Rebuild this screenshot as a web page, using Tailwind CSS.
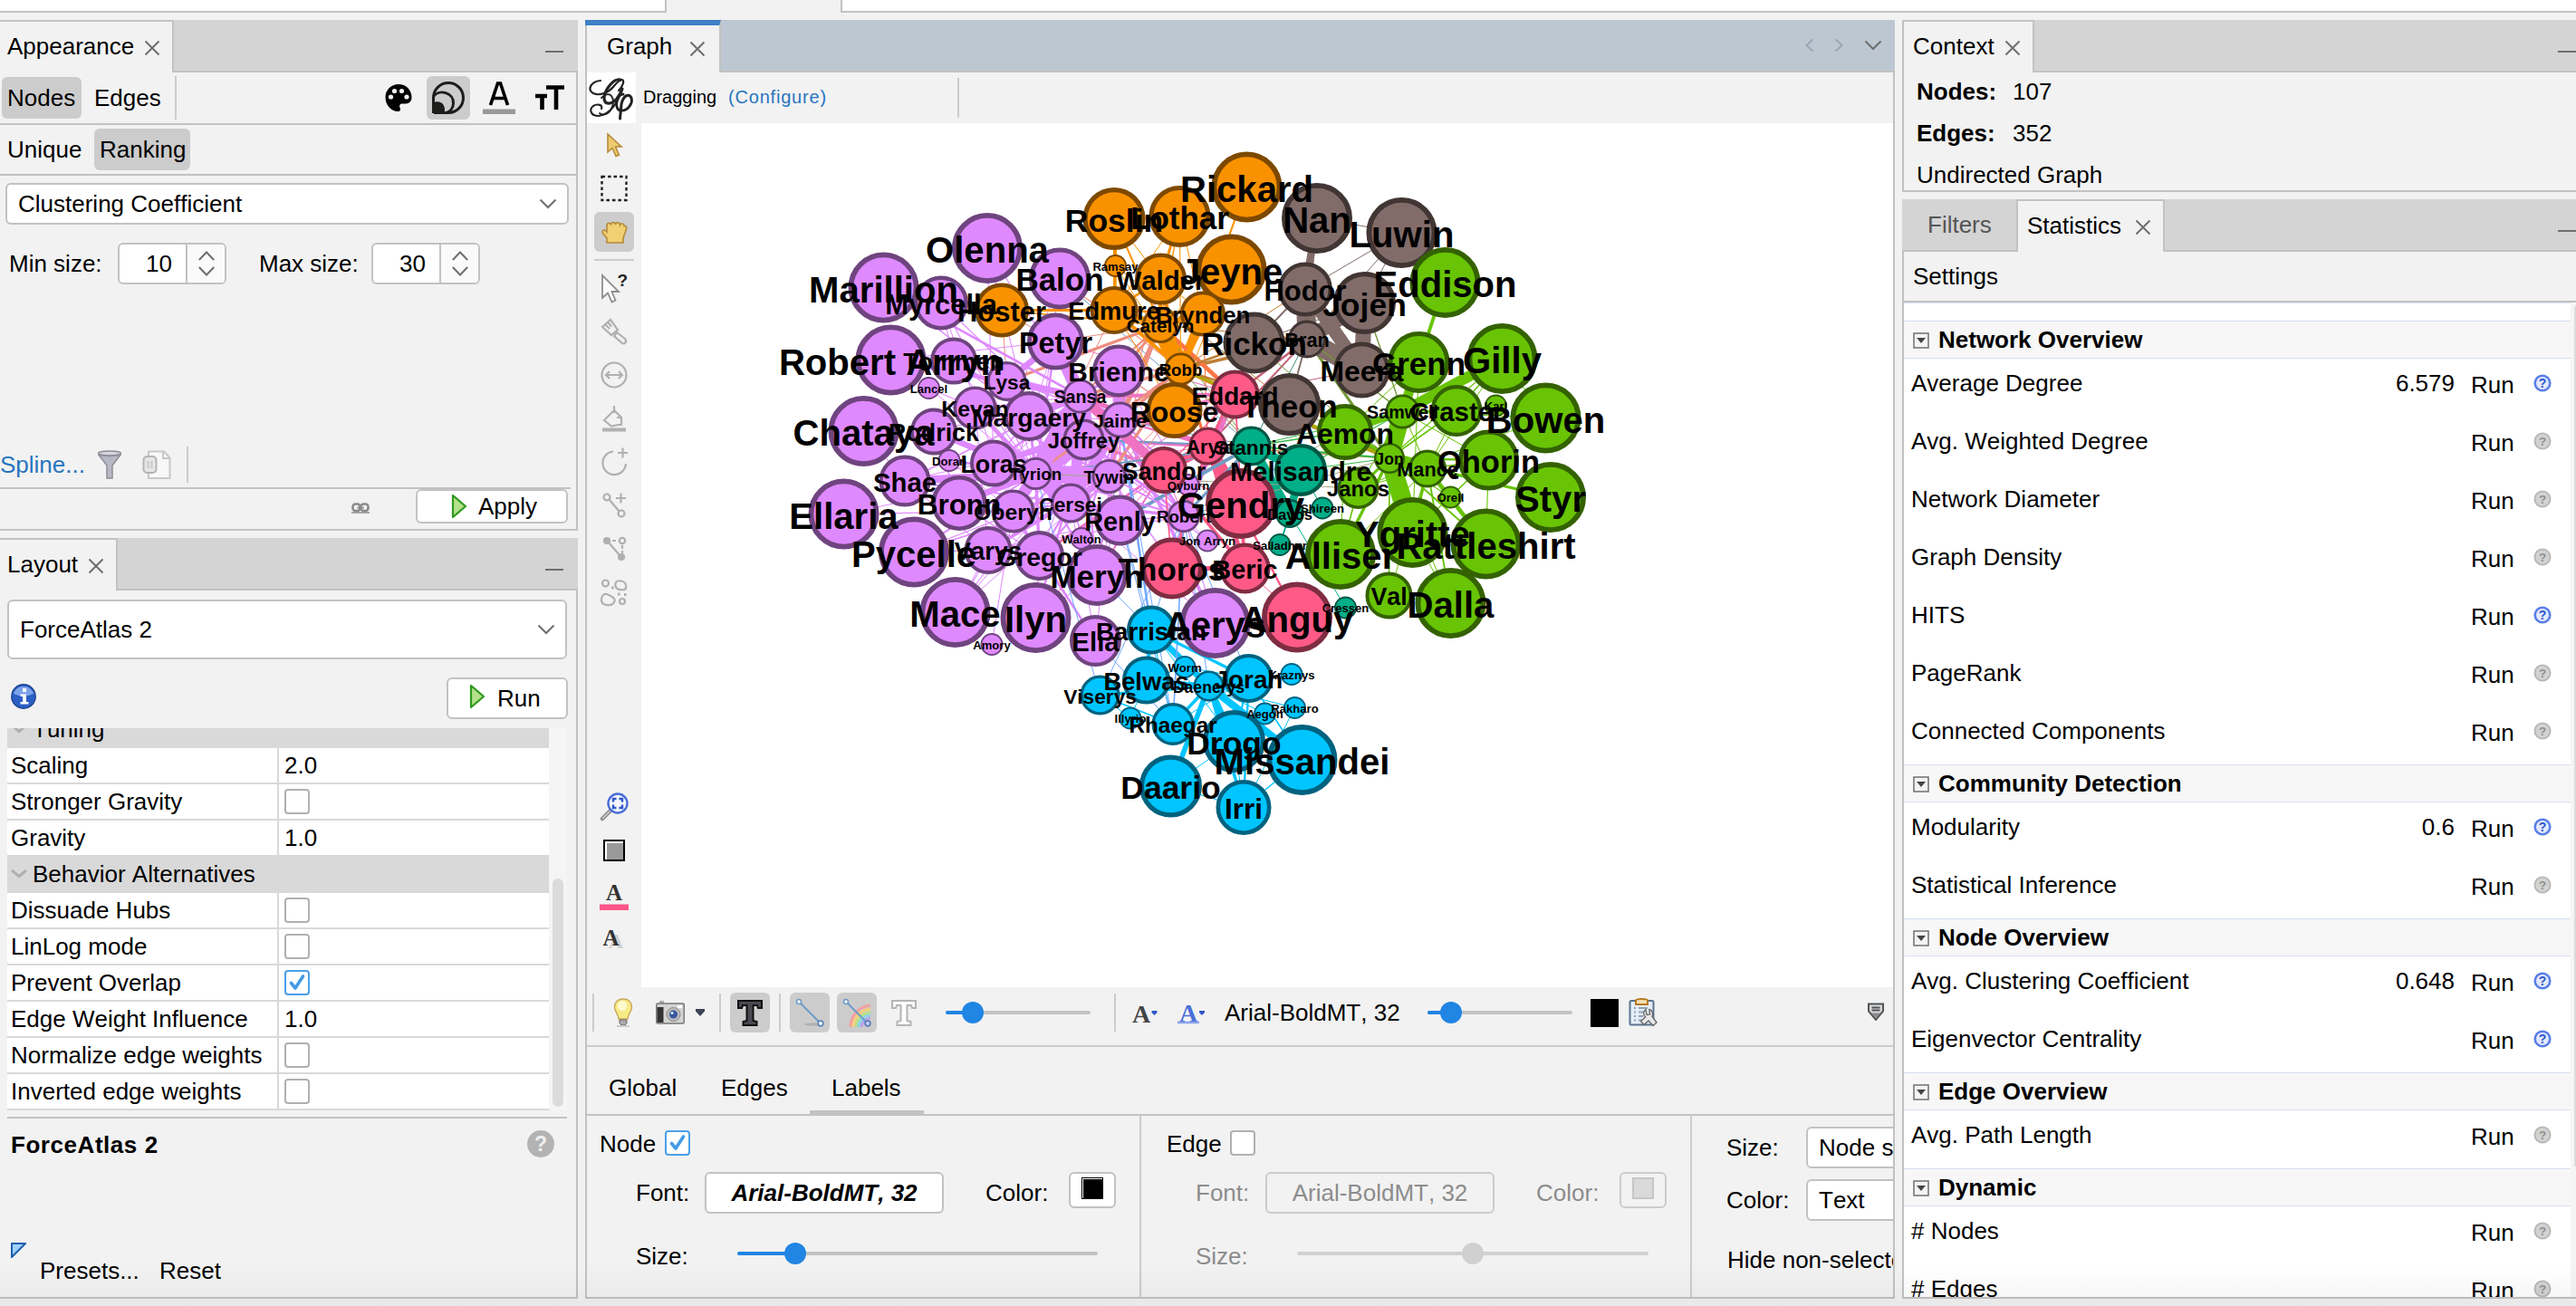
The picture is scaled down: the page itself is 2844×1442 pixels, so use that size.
<!DOCTYPE html>
<html lang="en">
<head>
<meta charset="utf-8">
<title>Gephi</title>
<script src="https://cdn.jsdelivr.net/npm/@tailwindcss/browser@4"></script>
</head>
<body class="relative flex h-[1442px] w-[2844px] flex-col overflow-hidden bg-[#f2f2f2] font-['Liberation_Sans',Arial,sans-serif] text-[26px] leading-[30px] text-black [font-kerning:none]">

<!-- shared symbols -->
<svg class="hidden">
  <symbol id="close" viewBox="0 0 18 18"><path d="M1.5 1.5l15 15M16.500 1.500l-15 15" fill="none" stroke="#6e6e6e" stroke-width="2"/></symbol>
  <symbol id="chev" viewBox="0 0 20 12"><path d="M1.5 1.5l8.500 8.500l8.500-8.500" fill="none" stroke="#6e6e6e" stroke-width="2"/></symbol>
  <symbol id="spin" viewBox="0 0 18 28"><path d="M.8 10L9 1.500L17.200 10M.8 18l8.200 8.500l8.200-8.500" fill="none" stroke="#6e6e6e" stroke-width="2"/></symbol>
  <symbol id="play" viewBox="0 0 18 28"><path d="M2 2L16 14L2 26Z" fill="#b5e08c" stroke="#2f9a1f" stroke-width="2.200" stroke-linejoin="round"/></symbol>
  <symbol id="tick" viewBox="0 0 24 24"><path d="M5.500 12.500l4.500 5.500l8.500-13" fill="none" stroke="#459be6" stroke-width="3.600" stroke-linecap="round" stroke-linejoin="round"/></symbol>
  <symbol id="toggle" viewBox="0 0 18 18"><rect x="1" y="1" width="16" height="16" fill="#f4f4f4" stroke="#777" stroke-width="1.600"/><path d="M4 6h10l-5 6z" fill="#444"/></symbol>
  <symbol id="helpBlue" viewBox="0 0 20 20"><circle cx="10" cy="10" r="8.300" fill="#e3e9ff" stroke="#5b7fe8" stroke-width="2.600"/><text x="10" y="15" text-anchor="middle" font-size="14" font-weight="bold" font-family="Liberation Sans" fill="#2f55c8">?</text></symbol>
  <symbol id="helpGray" viewBox="0 0 20 20"><circle cx="10" cy="10" r="8.600" fill="#d2d2d2" stroke="#b6b6b6" stroke-width="1.800"/><text x="10" y="14.800" text-anchor="middle" font-size="13.500" font-weight="bold" font-family="Liberation Sans" fill="#909090">?</text></symbol>
</svg>

<!-- perspective tabs, cut off by the top of the window -->
<div class="flex h-[22px] shrink-0 items-start">
  <div class="h-[14px] w-[736px] border-r-2 border-b-2 border-[#c2c2c2] bg-white"></div>
  <div class="w-[192px]"></div>
  <div class="h-[14px] flex-1 border-b-2 border-l-2 border-[#c2c2c2] bg-white"></div>
</div>

<div class="flex h-[1412px] shrink-0">
  <!-- left column -->
  <div class="mr-2 flex w-[638px] flex-col">
    <!-- Appearance -->
    <section class="flex h-[564px] flex-col border-r-2 border-b-2 border-[#c2c2c2]">
      <header class="-mr-0.5 flex h-[58px] shrink-0">
        <div class="flex w-[192px] items-center border-t-2 border-r-2 border-[#c2c2c2] pb-0.5 pl-2">
          <span class="w-[151px]">Appearance</span><svg class="mt-1 size-[18px]"><use href="#close"/></svg>
        </div>
        <div class="flex-1 border-b-2 border-[#c2c2c2] bg-[#d4d4d4]"><div class="mt-[34px] mr-4 ml-auto h-0.5 w-5 bg-[#6e6e6e]"></div></div>
      </header>
      <div class="flex h-[58px] shrink-0 items-center border-b-2 border-[#c2c2c2] pl-0.5">
        <span class="w-[88px] rounded-md bg-[#ccc] px-1.5 py-2">Nodes</span>
        <span class="ml-[14px] w-[89px]">Edges</span>
        <i class="h-12 w-0.5 bg-[#ccc]"></i>
        <svg class="ml-[227px] size-9" viewBox="0 0 36 36"><path d="M18 3C9.500 3 3.500 9.500 3.500 17.500S9.500 33 17.500 33c2.500 0 3-2 2-4c-1-3 0-4.500 2.500-4.500h4c4 0 6.500-3 6.500-7C32.500 9 26 3 18 3Z"/><g fill="#f2f2f2"><circle cx="9.500" cy="17" r="2.600"/><circle cx="13.500" cy="10.500" r="2.600"/><circle cx="21.500" cy="10.500" r="2.600"/><circle cx="27" cy="17" r="2.600"/></g></svg>
        <span class="ml-[13px] flex h-12 w-12 items-center justify-center rounded-md bg-[#ccc]"><svg class="size-9" viewBox="0 0 36 36" fill="none" stroke="#1d1d1b" stroke-width="3"><path d="M1.500 35V18A16.500 16.500 0 1 1 18 34.500H2"/><path d="M1.500 16.500C8 8 24 12 23.500 24C23.500 29 20 33 16 34.500"/><path d="M1 23.500c8-4 15 2 12.500 11.500H1z" fill="#1d1d1b" stroke="none"/></svg></span>
        <svg class="ml-[14px] h-[36px] w-9" viewBox="0 0 36 36"><path d="M8.500 26L16.500 2h3L27.500 26M11 18.500h14" fill="none" stroke="#000" stroke-width="3.600"/><path d="M0 30.500h36V36H0z" fill="#999"/></svg>
        <svg class="ml-[22px] h-7 w-8" viewBox="0 0 32 28"><path d="M12 2.500h20M23 2.500V27M0 12h13M7.500 12V27" fill="none" stroke="#000" stroke-width="4.600"/></svg>
      </div>
      <div class="flex h-[56px] shrink-0 items-center border-b-2 border-[#c2c2c2] pl-2">
        <span class="w-[96px]">Unique</span><span class="w-[106px] rounded-md bg-[#ccc] px-1.5 py-2">Ranking</span>
      </div>
      <div class="mt-2 ml-1.5 flex h-[46px] w-[622px] shrink-0 items-center justify-between rounded-md border-2 border-[#c2c2c2] bg-white pr-[11px] pl-3">Clustering Coefficient<svg class="h-3 w-5"><use href="#chev"/></svg></div>
      <div class="mt-5 flex h-[46px] shrink-0 items-center pl-2.5">
        <span class="w-[120px]">Min size:</span>
        <div class="flex h-[46px] w-[120px] items-center rounded-md border-2 border-[#c2c2c2] bg-white"><span class="flex-1 pr-[15px] text-right">10</span><span class="flex h-full w-[43px] items-center justify-center rounded-r border-l-2 border-[#c2c2c2] bg-[#fafafa]"><svg class="h-7 w-[18px]"><use href="#spin"/></svg></span></div>
        <span class="ml-9 w-[124px]">Max size:</span>
        <div class="flex h-[46px] w-[120px] items-center rounded-md border-2 border-[#c2c2c2] bg-white"><span class="flex-1 pr-[15px] text-right">30</span><span class="flex h-full w-[43px] items-center justify-center rounded-r border-l-2 border-[#c2c2c2] bg-[#fafafa]"><svg class="h-7 w-[18px]"><use href="#spin"/></svg></span></div>
      </div>
      <div class="mt-auto flex h-[52px] w-[630px] shrink-0 items-center border-b-2 border-[#c2c2c2]">
        <span class="w-[107px] text-[#2675bf]">Spline...</span>
        <svg class="h-8 w-7" viewBox="0 0 28 32"><ellipse cx="14" cy="3.500" rx="12.500" ry="2.500" fill="#d7d7e0" stroke="#8d8d96" stroke-width="1.500"/><path d="M1.500 4.500L11 17v14h6V17L26.500 4.500C22 7 6 7 1.500 4.500Z" fill="#b9b9c6" stroke="#8d8d96" stroke-width="1.500"/></svg>
        <svg class="ml-[22px] h-8 w-8" viewBox="0 0 32 32" fill="#f8f8f8" stroke="#c8c8c8" stroke-width="2"><path d="M7 1.500h17l6.500 7V31H7z"/><path d="M23 2v7h7" fill="none"/><rect x="1.500" y="7" width="14" height="18" rx="4" fill="#e6e6e6" stroke="#b4b4b4"/><path d="M6.500 12v8M10.500 12v8" fill="none"/></svg>
        <i class="ml-[17px] h-10 w-0.5 bg-[#ccc]"></i>
      </div>
      <div class="flex h-[44px] shrink-0 items-start justify-end pr-[9px]">
        <svg class="mt-[15px] mr-[51px] h-3 w-5" viewBox="0 0 20 12" fill="none" stroke="#8a8a8a" stroke-width="2.600"><rect x="1.500" y="1.500" width="8" height="7.500" rx="3"/><rect x="10.500" y="1.500" width="8" height="7.500" rx="3"/><path d="M6 5.500h8M0 11h20" stroke-width="1.600"/></svg>
        <button class="flex h-[38px] w-[168px] items-center rounded-md border-2 border-[#c2c2c2] bg-white pl-[37px]"><svg class="h-7 w-[18px]"><use href="#play"/></svg><span class="ml-3">Apply</span></button>
      </div>
    </section>
    <!-- Layout -->
    <section class="mt-2 flex h-[840px] flex-col border-r-2 border-b-2 border-[#c2c2c2]">
      <header class="-mr-0.5 flex h-[58px] shrink-0">
        <div class="flex w-[130px] items-center border-t-2 border-r-2 border-[#c2c2c2] pb-0.5 pl-2"><span class="w-[89px]">Layout</span><svg class="mt-1 size-[18px]"><use href="#close"/></svg></div>
        <div class="flex-1 border-b-2 border-[#c2c2c2] bg-[#d4d4d4]"><div class="mt-[34px] mr-4 ml-auto h-0.5 w-5 bg-[#6e6e6e]"></div></div>
      </header>
      <div class="mt-2.5 ml-2 flex h-[66px] w-[618px] shrink-0 items-center justify-between rounded-md border-2 border-[#c2c2c2] bg-white pr-[11px] pl-3">ForceAtlas 2<svg class="h-3 w-5"><use href="#chev"/></svg></div>
      <div class="mt-5 mr-[9px] flex h-[46px] shrink-0 items-center justify-between pl-3">
        <svg class="mb-1 size-7" viewBox="0 0 28 28"><circle cx="14" cy="14" r="13.200" fill="#2c5fc4" stroke="#1e4590" stroke-width="1.400"/><path d="M3 11a11.500 11.500 0 0 1 22 0q-11 5-22 0z" fill="#7fa3ea"/><path d="M13 5h4v4h-4zM10.500 11.500H17V20h2.500v2.500h-9V20H13v-6h-2.500z" fill="#fff"/></svg>
        <button class="flex h-[46px] w-[134px] items-center rounded-md border-2 border-[#c2c2c2] bg-white pl-[23px]"><svg class="mb-1 h-7 w-[18px]"><use href="#play"/></svg><span class="ml-[13px]">Run</span></button>
      </div>
      <div class="mt-2.5 ml-2 flex h-[422px] w-[618px] shrink-0 overflow-hidden">
        <div id="props" class="flex h-[422px] w-[598px] flex-col justify-end overflow-hidden"></div>
        <div class="w-5 bg-[#f5f5f5] px-1 pt-[166px]"><div class="h-[252px] rounded-full bg-[#dbdbdb]"></div></div>
      </div>
      <div class="mt-[7px] ml-2 h-0.5 w-[618px] shrink-0 bg-[#c2c2c2]"></div>
      <div class="mt-3 flex items-center justify-between pr-[23px] pl-3"><b class="mt-0.5 tracking-[0.55px]">ForceAtlas 2</b>
        <svg class="size-8" viewBox="0 0 32 32"><circle cx="16" cy="16" r="15" fill="#b3b3b3"/><text x="16" y="24" text-anchor="middle" font-size="23" font-weight="bold" font-family="Liberation Sans" fill="#f0f0f0">?</text></svg></div>
      <div class="mt-auto flex items-start pb-[14px] pl-3"><svg class="size-[17px]" viewBox="0 0 17 17"><path d="M1 1h15L1 16z" fill="#9fd0f8" stroke="#1f5fae" stroke-width="2"/></svg><span class="ml-[15px] flex h-[46px] w-[132px] items-end">Presets...</span><span class="flex h-[46px] items-end">Reset</span></div>
    </section>
  </div>

  <!-- graph window -->
  <section class="flex w-[1446px] flex-col border-x-2 border-b-2 border-[#c2c2c2]">
    <header class="-mx-0.5 flex h-[58px] shrink-0">
      <div class="flex w-[150px] items-center border-t-[6px] border-r-2 border-t-[#3d80c6] border-r-[#c2c2c2] pb-1.5 pl-6"><span class="w-[91px]">Graph</span><svg class="mt-1.5 size-[18px]"><use href="#close"/></svg></div>
      <div class="flex flex-1 items-center justify-end border-b-2 border-[#c2c2c2] bg-[#bdc7d1] pr-3.5">
        <svg class="h-4 w-3" viewBox="0 0 12 16"><path d="M9.500 1.500L2.500 8l7 6.500" fill="none" stroke="#9aa6b3" stroke-width="2"/></svg>
        <svg class="ml-5 h-4 w-3" viewBox="0 0 12 16"><path d="M2.500 1.500l7 6.500l-7 6.500" fill="none" stroke="#9aa6b3" stroke-width="2"/></svg>
        <svg class="ml-[22px] h-3 w-5"><use href="#chev"/></svg>
      </div>
    </header>
    <div class="flex h-14 shrink-0 items-center text-[20px]">
      <svg class="h-14 w-[54px] bg-white" viewBox="0 0 54 56" fill="none" stroke="#222" stroke-linecap="round"><path d="M15 9C4 10 0 19 7 23c7 3.500 17-1 22-7c4-5 8-8 10-8c3 1 0 8-4 12" stroke-width="2.200"/><path d="M37 8c-7-2-17 10-18 20c0 8 8 8 14 1c3-4 5-8 6-11" stroke-width="3.200"/><path d="M39 19C34 32 27 46 13 48C4 48 2 41 7 37c5-3 11-1 9 3" stroke-width="2.200"/><path d="M16 28c10-10 16 1 11 12c-3 7-10 8-13 5" stroke-width="1.800"/><path d="M40 24c-8 0-10 17-3 18c8 1 14-8 12-14c-3-6-9-2-11 7l-1.500 16" stroke-width="3"/></svg>
      <span class="mb-0.5 ml-2 w-[94px]">Dragging</span><span class="mb-0.5 w-[253px] tracking-[0.8px] text-[#2675bf]">(Configure)</span>
      <i class="h-11 w-0.5 bg-[#ccc]"></i>
    </div>
    <div class="flex h-[954px] shrink-0">
      <div class="flex w-[60px] flex-col items-center">
        <div class="flex h-12 items-center"><svg class="size-8" viewBox="0 0 32 32"><path d="M9 4v20l5-4.500l4 9l3.500-1.500L17.500 18H24z" fill="#eccb6e" stroke="#b58a3c" stroke-width="1.600"/></svg></div>
        <div class="flex h-12 items-center"><svg class="size-8" viewBox="0 0 32 32"><rect x="2.500" y="3" width="27" height="26" fill="none" stroke="#222" stroke-width="2.400" stroke-dasharray="3.600 2.900"/></svg></div>
        <div class="flex h-12 items-center"><div class="flex h-11 w-11 items-center justify-center rounded-md bg-[#ccc]"><svg class="size-8" viewBox="0 0 32 32"><path d="M8 28v-5L3.500 17.500C2 14 5 12.500 8 16V8.500c.500-3 4-3 4.500 0C13 4.500 17 4.500 17.500 8c.500-3 4.500-3 5 .5c1-2.500 4.500-2 4.500 1c2-.5 3 1 2.500 3.500L26 23v5z" fill="#f1cf73" stroke="#b58a3c" stroke-width="1.600"/></svg></div></div>
        <div class="flex h-[14px] items-center"><div class="h-0.5 w-11 bg-[#ccc]"></div></div>
        <div class="flex h-12 items-center"><svg class="h-9 w-8" viewBox="0 0 32 36"><path d="M3 4v25l6-5.500l4.500 10l4-2L13.500 22H21z" fill="#fafafa" stroke="#8e8e8e" stroke-width="1.800"/><text x="19.500" y="16" font-size="19" font-weight="bold" font-family="Liberation Sans" fill="#222">?</text></svg></div>
        <div class="flex h-12 items-center"><svg class="size-8" viewBox="0 0 32 32" fill="none" stroke="#b0b0b0" stroke-width="2.200"><path d="M3 11l9-8l8 11l-7 6zM6 8l5 5M9 5.500l4 5"/><path d="M19 17l-3 4l9 8c4 1.500 5-3 3-5z"/></svg></div>
        <div class="flex h-12 items-center"><svg class="size-8" viewBox="0 0 32 32" fill="none" stroke="#b0b0b0" stroke-width="2.200"><circle cx="16" cy="16" r="13.500"/><path d="M7 16h18M11 12l-4 4l4 4M21 12l4 4l-4 4"/></svg></div>
        <div class="flex h-12 items-center"><svg class="size-8" viewBox="0 0 32 32" fill="none" stroke="#b0b0b0" stroke-width="2.200"><path d="M5 18L16 7l8 8v8h-3l-8 1.500zM16 2v8M24 15h-5"/><path d="M3 28.500h26" stroke-width="4"/></svg></div>
        <div class="flex h-12 items-center"><svg class="size-8" viewBox="0 0 32 32" fill="none" stroke="#b0b0b0" stroke-width="2.200"><path d="M15 4.500A12.800 12.800 0 1 0 29 18M20 6h11M25.500.5v11"/></svg></div>
        <div class="flex h-12 items-center"><svg class="size-8" viewBox="0 0 32 32" fill="none" stroke="#b0b0b0" stroke-width="2.200"><circle cx="8" cy="7" r="3.500"/><circle cx="24" cy="25" r="3.500"/><path d="M10.500 9.500l11 13M18 8h11M23.500 2.500v11"/></svg></div>
        <div class="flex h-12 items-center"><svg class="size-8" viewBox="0 0 32 32" fill="none" stroke="#b0b0b0" stroke-width="2.200"><circle cx="8" cy="7" r="3" fill="#b0b0b0"/><circle cx="24" cy="25" r="3" fill="#b0b0b0"/><circle cx="25" cy="7" r="3.200"/><path d="M10 9l12 14M14 7h4M25 12v4M25 18v3"/></svg></div>
        <div class="flex h-12 items-center"><svg class="size-8" viewBox="0 0 32 32" fill="none" stroke="#b0b0b0" stroke-width="2.200"><circle cx="6.500" cy="6" r="3.500"/><path d="M18 5c2-3 10-2 11 3c1 4-1 6-5 5c-5 1-8-4-6-8zM4 19c3-3 6 0 8 1c4 2 6 4 4 7c-2 4-10 4-13 1c-2-3-1-7 1-9z"/><circle cx="25" cy="26" r="3"/><path d="M13 11h2.500M20 18h2.500M27 18.500h2.500" stroke-width="2.800"/></svg></div>
        <div class="mt-auto flex h-[34px] items-center"><svg class="size-8" viewBox="0 0 32 32"><path d="M3 29l9-9" stroke="#8c8c8c" stroke-width="4.500" stroke-linecap="round"/><path d="M3 29l9-9" stroke="#d0d0d0" stroke-width="1.500"/><circle cx="20" cy="12" r="10.500" fill="#f4f6ff" stroke="#4a6fd8" stroke-width="2.400"/><path d="M15 10.500V7h3.500M21.500 7H25v3.500M25 13.500V17h-3.500M18.500 17H15v-3.500" fill="none" stroke="#2f55c8" stroke-width="2.400"/></svg></div>
        <div class="flex h-[62px] items-center"><div class="size-6 border-2 border-black bg-[#999] shadow-[inset_1px_1px_0_1px_#fff]"></div></div>
        <div class="flex h-[42px] items-center"><svg class="size-8" viewBox="0 0 32 32"><text x="16" y="19" text-anchor="middle" font-size="25" font-weight="bold" font-family="Liberation Serif" fill="#333">A</text><path d="M0 23.500h32V30H0z" fill="#ff5589"/></svg></div>
        <div class="mb-[30px] flex h-12 items-center"><svg class="size-8" viewBox="0 0 32 32"><text x="18" y="27" text-anchor="middle" font-size="23" font-weight="bold" font-family="Liberation Serif" fill="#cfcfcf">A</text><text x="12.500" y="23.500" text-anchor="middle" font-size="25" font-weight="bold" font-family="Liberation Serif" fill="#333">A</text></svg></div>
      </div>
      <svg id="graph" class="h-[954px] w-[1382px] bg-white" viewBox="708 136 1382 954" font-family="Liberation Sans, Arial, sans-serif" font-weight="bold" text-anchor="middle"></svg>
    </div>
    <div class="flex h-[66px] shrink-0 items-center border-b-2 border-[#ccc] pb-2">
      <i class="ml-1.5 h-[42px] w-0.5 bg-[#ccc]"></i>
      <svg class="ml-4 size-8" viewBox="0 0 32 32"><path d="M16 1C9 1 6 6 6.500 11c.5 4 4 6 4.500 12h10c.5-6 4-8 4.500-12C26 6 23 1 16 1z" fill="#f7eb86" stroke="#c9a85c" stroke-width="1.500"/><ellipse cx="15" cy="8.500" rx="5" ry="5.500" fill="#fdfad0"/><path d="M12 24h8v3.500l-2 2.500h-4l-2-2.500z" fill="#aaa" stroke="#666"/><path d="M9 31h14" stroke="#ccc" stroke-width="2"/></svg>
      <svg class="ml-5 size-8" viewBox="0 0 32 32"><path d="M4 3h5v3H4z" fill="#aaa"/><rect x=".8" y="6" width="30.500" height="22" rx="1.500" fill="#d4d4d4" stroke="#777" stroke-width="1.500"/><path d="M1.500 10h7v17h-7z" fill="#333"/><path d="M24 8h5v3h-5z" fill="#fff"/><circle cx="19.500" cy="18" r="7.500" fill="#bbb" stroke="#888"/><circle cx="19.500" cy="18" r="4.500" fill="#3b57a0"/><circle cx="18" cy="16.500" r="1.500" fill="#cfe"/></svg>
      <svg class="ml-3 h-2 w-2.5" viewBox="0 0 10 8"><path d="M0 0h10v2.500L5 8L0 2.500z" fill="#3c4454"/></svg>
      <i class="ml-4 h-[42px] w-0.5 bg-[#ccc]"></i>
      <span class="ml-2.5 flex size-11 items-center justify-center rounded-md bg-[#ccc]"><svg class="size-8" viewBox="0 0 32 32"><path d="M3 3h26v8h-4l-1-3h-4.500v17l4 1v4H8.500v-4l4-1V8H8l-1 3H3z" fill="#4a4a52" stroke="#111" stroke-width="2"/></svg></span>
      <i class="ml-2.5 h-[42px] w-0.5 bg-[#ccc]"></i>
      <span class="ml-2.5 flex size-11 items-center justify-center rounded-md bg-[#ccc]"><svg class="size-8" viewBox="0 0 32 32"><ellipse cx="20" cy="29" rx="10" ry="1.800" fill="#b2b2b2"/><path d="M5 5l22 22" stroke="#6f9cc8" stroke-width="2"/><circle cx="4" cy="4" r="2.500" fill="#fff" stroke="#6f9cc8" stroke-width="1.600"/><circle cx="28" cy="28" r="2.800" fill="#fff" stroke="#5c88b8" stroke-width="1.800"/></svg></span>
      <span class="ml-2 flex size-11 items-center justify-center rounded-md bg-[#ccc]"><svg class="size-8" viewBox="0 0 32 32" fill="none" stroke-width="3.200"><path d="M9 32A24 24 0 0 1 31 8" stroke="#f2a0a0"/><path d="M12 32A21 21 0 0 1 31 12" stroke="#f6cf7c"/><path d="M15 32A18 18 0 0 1 31 15.500" stroke="#b9e08a"/><path d="M18 32A14 14 0 0 1 31 19" stroke="#8fd6e8"/><path d="M21 32A11 11 0 0 1 31 22" stroke="#b9a3e8"/><path d="M5 5l22 22" stroke="#6f9cc8" stroke-width="2"/><circle cx="4" cy="4" r="2.500" fill="#fff" stroke="#6f9cc8" stroke-width="1.600"/><circle cx="28" cy="28" r="2.800" fill="#cfd6ff" stroke="#5c78b8" stroke-width="1.800"/></svg></span>
      <svg class="ml-3.5 size-8" viewBox="0 0 32 32"><path d="M3 3h26v8h-4l-1-3h-4.500v17l4 1v4H8.500v-4l4-1V8H8l-1 3H3z" fill="#fcfcfc" stroke="#b4b4b4" stroke-width="2"/></svg>
      <svg class="ml-[30px] h-6 w-40" viewBox="0 0 160 24"><path d="M2 12h156" stroke="#c2c2c2" stroke-width="4" stroke-linecap="round"/><path d="M2 12h28" stroke="#2085e3" stroke-width="4" stroke-linecap="round"/><circle cx="30" cy="12" r="12" fill="#2085e3"/></svg>
      <i class="ml-[26px] h-[42px] w-0.5 bg-[#ccc]"></i>
      <svg class="ml-[18px] size-8" viewBox="0 0 32 32"><text x="10" y="27" text-anchor="middle" font-size="28" font-weight="bold" font-family="Liberation Serif" fill="#444">A</text><path d="M21.500 14h6v2l-3 3l-3-3z" fill="#2f55c8"/></svg>
      <svg class="ml-[18px] size-8" viewBox="0 0 32 32"><text x="12" y="26" text-anchor="middle" font-size="28" font-weight="bold" font-family="Liberation Serif" fill="#4a6fd8">A</text><path d="M0 27h24" stroke="#8aa4ee" stroke-width="2.500"/><path d="M24 14h6v2l-3 3l-3-3z" fill="#2f55c8"/></svg>
      <span class="ml-5 w-[196px] whitespace-nowrap">Arial-BoldMT, 32</span>
      <svg class="ml-7 h-6 w-40" viewBox="0 0 160 24"><path d="M2 12h156" stroke="#c2c2c2" stroke-width="4" stroke-linecap="round"/><path d="M2 12h24" stroke="#2085e3" stroke-width="4" stroke-linecap="round"/><circle cx="26" cy="12" r="12" fill="#2085e3"/></svg>
      <div class="ml-5 size-[31px] bg-black"></div>
      <svg class="ml-[11px] size-8" viewBox="0 0 32 32"><rect x="1.500" y="3" width="26" height="26.500" rx="1.500" fill="#e4edf6" stroke="#5b748e" stroke-width="2"/><path d="M6 11h2M11 11h10M6 15.500h2M11 15.500h7M6 20h2M11 20h5M6 24.500h2M11 24.500h4" stroke="#8fa3b8" stroke-width="1.800"/><path d="M8 2.500C8 .5 21 .5 21 2.500V7H8z" fill="#f3dfb4" stroke="#b57a1e" stroke-width="2"/><path d="M19 12.500c-3 2.500-3 6-.5 8.500l-5 4.500l3.500 4l5-4.500l5 5.500l4-3.500l-5-6.500c1.500-4 0-7-3-8l.5 5.500l-3.500.5z" fill="#e8e8e8" stroke="#6a6a6a" stroke-width="1.400"/></svg>
      <svg class="mr-[9px] mb-0.5 ml-auto size-5" viewBox="0 0 20 20"><path d="M2 1.500h16v8l-8 9.500l-8-9.500z" fill="#d8d8d8" stroke="#4f5358" stroke-width="2"/><path d="M5.500 5.500h9M5.500 8.500h9" stroke="#4f5358" stroke-width="1.800"/><path d="M5 11.500h10l-5 6z" fill="#8a8a8a"/></svg>
    </div>
    <nav class="flex h-[76px] shrink-0 items-stretch border-b-2 border-[#c2c2c2] pt-[30px] pl-6">
      <span class="w-[124px]">Global</span><span class="w-[98px]">Edges</span><span class="h-11 w-[126px] border-b-4 border-[#c2c2c2] pl-6">Labels</span>
    </nav>
    <div class="flex h-[200px] shrink-0 overflow-hidden">
      <div class="w-[612px] shrink-0 border-r-2 border-[#ccc] pl-3.5">
        <div class="mt-4 flex h-7 items-center"><span class="mt-0.5 w-[72px]">Node</span><span class="flex size-7 items-center justify-center rounded border-2 border-[#4aa0e8] bg-white"><svg class="size-6"><use href="#tick"/></svg></span></div>
        <div class="mt-[18px] ml-10 flex h-[46px] items-start"><span class="mt-2 w-[76px]">Font:</span><button class="h-[46px] w-[264px] rounded-md border-2 border-[#c2c2c2] bg-white font-bold whitespace-nowrap italic">Arial-BoldMT, 32</button><span class="mt-2 ml-[46px] w-[92px]">Color:</span><span class="flex h-10 w-[52px] items-center justify-center rounded-md border-2 border-[#c2c2c2] bg-white"><span class="mb-1 size-6 border border-black bg-black shadow-[inset_1px_1px_0_0_#fff]"></span></span></div>
        <div class="mt-8 ml-10 flex h-6 items-center"><span class="mt-1.5 w-[112px]">Size:</span><svg class="h-6 w-[398px]" viewBox="0 0 398 24"><path d="M2 12h394" stroke="#c2c2c2" stroke-width="4" stroke-linecap="round"/><path d="M2 12h62" stroke="#2085e3" stroke-width="4" stroke-linecap="round"/><circle cx="64" cy="12" r="12" fill="#2085e3"/></svg></div>
      </div>
      <div class="w-[608px] shrink-0 border-r-2 border-[#ccc] pl-7">
        <div class="mt-4 flex h-7 items-center"><span class="mt-0.5 w-[70px]">Edge</span><span class="size-7 rounded border-2 border-[#b0b0b0] bg-white"></span></div>
        <div class="mt-[18px] ml-8 flex h-[46px] items-start text-[#8c8c8c]"><span class="mt-2 w-[77px]">Font:</span><button class="h-[46px] w-[253px] rounded-md border-2 border-[#ccc] whitespace-nowrap">Arial-BoldMT, 32</button><span class="mt-2 ml-[46px] w-[92px]">Color:</span><span class="flex h-10 w-[52px] items-center justify-center rounded-md border-2 border-[#ccc]"><span class="mb-1 size-6 border-2 border-[#c6c6c6] bg-[#dadada]"></span></span></div>
        <div class="mt-8 ml-8 flex h-6 items-center"><span class="mt-1.5 w-[112px] text-[#8c8c8c]">Size:</span><svg class="h-6 w-[388px]" viewBox="0 0 388 24"><path d="M2 12h384" stroke="#d0d0d0" stroke-width="4" stroke-linecap="round"/><circle cx="194" cy="12" r="12" fill="#d0d0d0"/></svg></div>
      </div>
      <div class="w-[222px] shrink-0 overflow-hidden pl-[38px] whitespace-nowrap">
        <div class="mt-3 flex h-[46px] items-center"><span class="w-[88px] shrink-0">Size:</span><span class="flex h-[46px] w-[180px] shrink-0 items-center rounded-md border-2 border-[#c2c2c2] bg-white pl-3">Node size</span></div>
        <div class="mt-3 flex h-[46px] items-center"><span class="w-[88px] shrink-0">Color:</span><span class="flex h-[46px] w-[180px] shrink-0 items-center rounded-md border-2 border-[#c2c2c2] bg-white pl-3">Text</span></div>
        <div class="mt-7 ml-px">Hide non-selected</div>
      </div>
    </div>
  </section>

  <!-- right column -->
  <div class="ml-2 flex flex-1 flex-col overflow-hidden">
    <section class="h-[190px] shrink-0 border-b-2 border-l-2 border-[#c2c2c2]">
      <header class="-ml-0.5 flex h-[58px]">
        <div class="flex w-[146px] items-center border-2 border-b-0 border-[#c2c2c2] pb-0.5 pl-2.5"><span class="w-[101px]">Context</span><svg class="mt-1 size-[18px]"><use href="#close"/></svg></div>
        <div class="flex-1 border-b-2 border-[#c2c2c2] bg-[#d4d4d4]"><div class="mt-[34px] ml-auto h-0.5 w-5 bg-[#6e6e6e]"></div></div>
      </header>
      <div class="pt-1.5 pl-3.5">
        <div class="mb-4 flex"><b class="w-[106px]">Nodes:</b>107</div>
        <div class="mb-4 flex"><b class="w-[106px]">Edges:</b>352</div>
        <div>Undirected Graph</div>
      </div>
    </section>
    <section class="mt-2 flex h-[1214px] flex-col border-b-2 border-l-2 border-[#c2c2c2]">
      <header class="-ml-0.5 flex h-[58px] shrink-0">
        <div class="flex w-[126px] items-center border-b-2 border-[#c2c2c2] bg-[#d4d4d4] pl-7 text-[#555]">Filters</div>
        <div class="flex w-[164px] items-center border-2 border-b-0 border-[#c2c2c2] pb-0.5 pl-2.5"><span class="w-[119px]">Statistics</span><svg class="mt-1 size-[18px]"><use href="#close"/></svg></div>
        <div class="flex-1 border-b-2 border-[#c2c2c2] bg-[#d4d4d4]"><div class="mt-[34px] ml-auto h-0.5 w-5 bg-[#6e6e6e]"></div></div>
      </header>
      <div class="flex h-14 shrink-0 items-center border-b-2 border-[#c2c2c2] pl-2.5">Settings</div>
      <div class="flex min-h-0 flex-1 overflow-hidden bg-white">
        <div id="stats" class="w-[736px] border-t border-[#d5def2] pt-[19px]"></div>
        <div class="flex-1 bg-[#f5f5f5] pt-1 pl-1"><div class="h-[950px] bg-[#dbdbdb]"></div></div>
      </div>
    </section>
  </div>
</div>

<div class="pointer-events-none absolute inset-x-0 bottom-0 h-12 bg-linear-to-t from-black/4 to-transparent"></div>

<script>
// layout property sheet
const off = '<span class="size-7 rounded border-2 border-[#b0b0b0] bg-white"></span>';
const on = '<span class="flex size-7 items-center justify-center rounded border-2 border-[#4aa0e8] bg-white"><svg class="size-6"><use href="#tick"/></svg></span>';
const group = (t) => `<div class="flex h-10 shrink-0 items-center bg-[#d9d9d9] pb-0.5 pl-1"><svg class="mr-1.5 h-3 w-[18px]" viewBox="0 0 18 12"><path d="M1 2l8 6.500l8-6.500" fill="none" stroke="#b0b0b0" stroke-width="3"/></svg>${t}</div>`;
const prop = (t, v) => `<div class="flex h-10 shrink-0 border-b-2 border-[#d9d9d9] bg-white"><span class="flex w-[300px] items-center border-r-2 border-[#d9d9d9] pl-1 whitespace-nowrap">${t}</span><span class="flex items-center pl-1.5">${v}</span></div>`;
document.getElementById('props').innerHTML =
  group('Tuning') + prop('Scaling', '2.0') + prop('Stronger Gravity', off) + prop('Gravity', '1.0') +
  group('Behavior Alternatives') + prop('Dissuade Hubs', off) + prop('LinLog mode', off) + prop('Prevent Overlap', on) +
  prop('Edge Weight Influence', '1.0') + prop('Normalize edge weights', off) + prop('Inverted edge weights', off);

// statistics list: [name, value, report available]
const sections = [
  ['Network Overview', [['Average Degree', '6.579', 1], ['Avg. Weighted Degree', '', 0], ['Network Diameter', '', 0], ['Graph Density', '', 0], ['HITS', '', 1], ['PageRank', '', 0], ['Connected Components', '', 0]]],
  ['Community Detection', [['Modularity', '0.6', 1], ['Statistical Inference', '', 0]]],
  ['Node Overview', [['Avg. Clustering Coefficient', '0.648', 1], ['Eigenvector Centrality', '', 1]]],
  ['Edge Overview', [['Avg. Path Length', '', 0]]],
  ['Dynamic', [['# Nodes', '', 0], ['# Edges', '', 0]]]
];
document.getElementById('stats').innerHTML = sections.map(([t, rows]) =>
  `<div class="flex h-[42px] items-center border-y border-[#d5def2] bg-[#f7f7f7] pl-2.5"><svg class="mt-0.5 mr-2.5 size-[18px]"><use href="#toggle"/></svg><b>${t}</b></div>` +
  rows.map(([n, v, r]) => `<div class="flex h-16 items-start pt-3 pl-2"><span class="w-[400px]">${n}</span><span class="w-[200px] text-right">${v}</span><span class="mt-0.5 ml-[18px] w-[69px]">Run</span><svg class="mt-[5px] size-5"><use href="#${r ? 'helpBlue' : 'helpGray'}"/></svg></div>`).join('')).join('');

// graph: [community colour, "label,x,y,r;..."]
const communities = [
  [[223,137,255], 'Olenna,1090,274,39;Marillion,975.5,317.5,39;Myrcella,1039,334.5,30;Balon,1170,307.5,34;Petyr,1165.5,377,31.5;Robert Arryn,983.5,397.5,39;Tommen,1053,398.5,26;Lysa,1111.5,421,22;Lancel,1025.5,428.5,12.5;Kevan,1076.5,450.5,24;Sansa,1192.5,437.5,19;Margaery,1136,459.5,27.5;Brienne,1235,409.5,29;Chataya,953.5,476,39;Rodrick,1031,476.5,26;Jaime,1236.5,463.5,20;Joffrey,1196.5,485.5,23;Loras,1097,511.5,26;Doran,1048,508.5,12.5;Tyrion,1143.5,523,18;Tywin,1224.5,526,19;Shae,999,531,28.5;Ellaria,931.5,567.5,39;Bronn,1059,555.5,30.5;Pycelle,1009,609.5,39;Oberyn,1118.5,564.5,24;Cersei,1182,555.5,22;Renly,1236.5,574.5,28;Walton,1194,594.5,12.5;Varys,1091,607.5,26.5;Gregor,1147.5,613.5,27.5;Meryn,1211,635,34;Mace,1054.5,676,39;Ilyn,1143.5,682,39;Amory,1095,711.5,12.5;Elia,1209.5,707.5,28.5;Aerys,1341.5,688,39;Robert,1307,570,18;Qyburn,1312,535.5,12.5;Jon Arryn,1333,597,12.5'],
  [[250,146,0], 'Roslin,1230,241.5,34.5;Lothar,1302.5,239,34;Rickard,1376.5,206.5,39;Jeyne,1359.5,297.5,39;Ramsay,1231.5,293.5,12.5;Walder,1281.5,308,28.5;Edmure,1230,342.5,26.5;Brynden,1328,346.5,25;Catelyn,1281,359,20;Robb,1303.5,407.5,18;Roose,1296.5,453,31;Hoster,1106,342.5,30'],
  [[130,108,105], 'Nan,1454,241,39;Luwin,1547.5,257,39;Hodor,1441,319.5,30;Jojen,1506.5,334.5,34.5;Bran,1443,374.5,21;Rickon,1384.5,378.5,34;Meera,1503.5,408.5,31;Theon,1423.5,446.5,34.5'],
  [[255,90,135], 'Eddard,1363.5,435.5,27;Arya,1333.5,492.5,21;Sandor,1285,519,26;Gendry,1370,556,39;Thoros,1294,627.5,34;Beric,1374.5,627.5,28;Anguy,1432,681.5,39'],
  [[0,174,136], 'Stannis,1381.5,492.5,22;Melisandre,1436,519,29;Davos,1424,567,16;Shireen,1460,561,12.5;Salladhor,1413,601.5,12.5;Cressen,1485.5,671,12.5'],
  [[104,196,4], 'Eddison,1595.5,312,39;Grenn,1566.5,400,34;Gilly,1658.5,396,39;Bowen,1706.5,461.5,39;Samwell,1548.5,454.5,19;Craster,1608,453.5,28.5;Karl,1651.5,448,12.5;Aemon,1485,477,31;Jon,1534,506,17;Mance,1576,517.5,21;Qhorin,1643.5,508,33.5;Janos,1499.5,539,23;Orell,1601.5,549,12.5;Styr,1712,549,39;Ygritte,1559.5,588,39;Rattleshirt,1640.5,600.5,39;Alliser,1480,612,39;Val,1533.5,657.5,26;Dalla,1601.5,666,39'],
  [[0,197,255], 'Barristan,1271,695.5,27;Belwas,1265.5,751,26.5;Worm,1308,736.5,12.5;Daenerys,1334.5,757.5,17;Jorah,1378.5,749,27;Kraznys,1426,744.5,12.5;Viserys,1214.5,767.5,22;Illyrio,1248,793,12.5;Rhaegar,1295,799.5,23.5;Aegon,1396.5,788,12.5;Rakharo,1429.5,781.5,12.5;Drogo,1362.5,818.5,34.5;Missandei,1437.5,839,39;Daario,1292.5,868,34.5;Irri,1373,891.5,30.5']
];
// adjacency: source: target weight, ...
const links = `Aemon:Grenn 5,Samwell 31,Stannis 8,Jon 30,Alliser 5,Robert 4
Aerys:Jaime 18,Robert 6,Tyrion 5,Tywin 8
Alliser:Mance 5,Jon 15,Janos 8
Amory:Oberyn 5
Arya:Anguy 11,Beric 23,Bran 9,Brynden 6,Cersei 5,Gendry 60,Gregor 7,Jaime 11,Joffrey 15,Jon 7,Rickon 8,Robert 6,Roose 5,Sandor 46,Thoros 18,Tyrion 5,Eddard 19,Sansa 22,Robb 15,Catelyn 6
Balon:Loras 5,Robb 6,Tyrion 5,Stannis 4
Belwas:Barristan 18,Illyrio 5
Beric:Anguy 5,Gendry 17,Thoros 21,Sandor 16
Bran:Hodor 96,Jojen 66,Jon 14,Luwin 5,Meera 90,Nan 6,Rickon 32,Samwell 7,Theon 9,Eddard 12,Robb 15,Catelyn 5,Stannis 4
Brienne:Loras 8,Jaime 60,Sansa 9,Qyburn 4,Robb 5
Bronn:Gregor 6,Rodrick 8,Tyrion 30,Shae 4
Brynden:Lothar 5,Walder 5,Robb 40,Edmure 12
Catelyn:Brienne 7,Brynden 29,Cersei 5,Edmure 29,Hoster 8,Jaime 24,Jeyne 6,Lysa 15,Petyr 5,Robb 90,Roslin 6,Sansa 10,Stannis 4,Tyrion 9,Walder 20,Eddard 20,Tywin 5,Lothar 7,Roose 5
Cersei:Bronn 5,Elia 5,Gregor 8,Jaime 46,Joffrey 30,Meryn 8,Oberyn 9,Pycelle 8,Robert 16,Sansa 26,Shae 9,Tyrion 76,Varys 14,Lancel 5,Tywin 25,Margaery 7,Loras 6,Renly 5,Kevan 5
Craster:Karl 6,Samwell 14,Jon 8,Gilly 8,Grenn 8,Mance 4
Daario:Drogo 5,Irri 6
Daenerys:Aegon 5,Barristan 30,Belwas 22,Daario 24,Drogo 30,Irri 16,Jorah 60,Kraznys 6,Missandei 34,Rakharo 6,Rhaegar 16,Robert 5,Viserys 15,Worm 12
Davos:Cressen 5,Salladhor 9,Stannis 45,Melisandre 36,Shireen 6
Drogo:Illyrio 4,Jorah 10,Irri 6
Eddard:Jaime 10,Jon 17,Robert 23,Sansa 18,Robb 13,Beric 9,Joffrey 9,Varys 5,Petyr 5,Sandor 7,Rickon 6,Meera 4,Theon 4
Eddison:Grenn 17
Edmure:Hoster 14,Lothar 5,Roslin 9,Tyrion 4,Walder 12,Robb 18,Roose 4
Ellaria:Oberyn 6,Tyrion 4
Gilly:Bowen 4,Samwell 50,Jon 6,Mance 4
Grenn:Samwell 44,Aemon 5,Jon 18
Gregor:Bronn 6,Ilyn 7,Meryn 4,Oberyn 17,Sandor 13,Tywin 10,Elia 10,Tyrion 15
Hoster:Lysa 4,Petyr 4
Hodor:Jojen 14,Meera 60,Rickon 9,Luwin 4,Nan 35,Robb 4
Irri:Jorah 11,Missandei 7,Rakharo 5
Jaime:Barristan 11,Elia 4,Gregor 10,Joffrey 25,Loras 20,Meryn 9,Qyburn 11,Renly 9,Robert 17,Sansa 13,Stannis 4,Tommen 7,Tyrion 45,Varys 6,Tywin 25,Walton 10,Robb 15,Margaery 4,Rhaegar 4,Mace 4
Janos:Mance 5,Jon 14,Bowen 4,Samwell 6
Jeyne:Robb 20,Roose 3
Joffrey:Gregor 5,Ilyn 12,Kevan 15,Loras 13,Margaery 45,Meryn 10,Myrcella 6,Sandor 15,Sansa 87,Stannis 10,Tommen 13,Tywin 30,Tyrion 80,Robb 11,Robert 14,Varys 6,Mace 6,Shae 4
Jojen:Meera 70,Rickon 5,Luwin 4,Samwell 7
Jon:Dalla 5,Mance 60,Melisandre 5,Orell 6,Qhorin 12,Rattleshirt 9,Robert 5,Samwell 80,Stannis 10,Styr 14,Theon 5,Val 8,Ygritte 90,Craster 6,Robb 15,Rickon 4
Jon Arryn:Lysa 6,Robert 5
Kevan:Lancel 6,Varys 4,Tyrion 20,Tywin 10
Loras:Margaery 8,Olenna 6,Renly 14,Sansa 10,Tyrion 5,Tywin 4
Lothar:Robb 6,Roslin 4,Walder 14
Lysa:Cersei 5,Marillion 7,Petyr 29,Robert Arryn 8,Sansa 30,Tyrion 5,Tywin 4
Luwin:Jojen 4,Nan 4
Mace:Tyrion 6,Tywin 5,Varys 4
Mance:Craster 5,Dalla 9,Gilly 6,Qhorin 7,Rattleshirt 20,Styr 7,Val 5,Ygritte 14,Samwell 5
Margaery:Sansa 35,Tyrion 14,Olenna 5
Marillion:Sansa 12
Melisandre:Stannis 40,Samwell 6,Shireen 4
Meryn:Sandor 9,Sansa 6,Ilyn 4,Tyrion 10
Missandei:Jorah 8
Myrcella:Tyrion 6,Tommen 5,Oberyn 4,Joffrey 6
Oberyn:Tyrion 32,Tywin 9,Elia 8,Doran 4
Olenna:Sansa 6,Margaery 4
Petyr:Robert Arryn 5,Sansa 60,Tyrion 11,Varys 4
Doran:Tyrion 10,Tywin 4
Pycelle:Varys 6,Tyrion 9,Tywin 6
Qhorin:Ygritte 6,Orell 4
Rattleshirt:Ygritte 5,Qhorin 6
Renly:Sansa 8,Tyrion 7,Varys 4,Stannis 17,Meryn 4
Rickard:Robb 10
Rhaegar:Barristan 6,Elia 4,Robert 8,Jorah 4,Viserys 8,Tywin 3
Robb:Ramsay 4,Roose 14,Roslin 9,Sansa 15,Stannis 4,Theon 11,Tyrion 12,Walder 18,Tywin 15,Joffrey 12,Rickon 13
Robert:Barristan 5,Jorah 4,Renly 8,Sandor 4,Stannis 14,Thoros 6,Tyrion 10,Tywin 9,Varys 6,Sansa 8
Rodrick:Tyrion 28,Sansa 6
Roose:Brienne 7,Jaime 15,Walton 3,Tywin 5
Roslin:Walder 4
Ramsay:Theon 4,Edmure 16,Roslin 18
Samwell:Qhorin 4,Bowen 4,Stannis 5
Sandor:Ilyn 4,Robert 5,Sansa 45,Gendry 6,Gregor 8,Thoros 8,Tyrion 5
Sansa:Brienne 7,Bronn 5,Shae 8,Tyrion 80,Kevan 5,Robert Arryn 19,Tommen 4
Shae:Tyrion 36,Chataya 5,Tywin 5,Varys 6
Stannis:Balon 4,Tyrion 10,Tywin 6,Renly 12
Tommen:Tyrion 6,Tywin 6,Margaery 4
Tyrion:Varys 54,Tywin 79,Viserys 3,Janos 4
Tywin:Varys 12,Pycelle 6,Walder 6,Barristan 4
Viserys:Illyrio 4,Rhaegar 6,Robert 3,Jorah 4
Walton:Jaime 7
Worm:Belwas 4,Jorah 4
Ygritte:Dalla 4,Grenn 3
Barristan:Jorah 14,Meryn 4,Drogo 4
Dalla:Val 6,Rattleshirt 3`;
const nodes = {};
communities.forEach(([c, list]) => list.split(';').forEach(s => { const [n, x, y, r] = s.split(','); nodes[n] = { x: +x, y: +y, r: +r, c }; }));
const seen = new Set();
let edges = '', discs = '', labels = '';
links.split('\n').forEach(line => {
  const [a, rest] = line.split(':');
  rest.split(',').forEach(t => {
    const i = t.lastIndexOf(' '), b = t.slice(0, i), w = +t.slice(i + 1), key = [a, b].sort().join('|');
    if (seen.has(key) || !nodes[b]) return;
    seen.add(key);
    const p = nodes[a], q = nodes[b], c = p.c.map((v, k) => Math.round((v + q.c[k]) / 2));
    edges += `<path d="M${p.x} ${p.y}L${q.x} ${q.y}" stroke="rgb(${c})" stroke-width="${Math.min(21, Math.max(1, w * .25 - .4)).toFixed(1)}"/>`;
  });
});
for (const [n, { x, y, r, c }] of Object.entries(nodes)) {
  discs += `<circle cx="${x}" cy="${y}" r="${(r * .925).toFixed(2)}" fill="rgb(${c})" stroke="rgb(${c.map(v => v >> 1)})" stroke-width="${(r * .15).toFixed(2)}"/>`;
  labels += `<text x="${x}" y="${(y + r * .41).toFixed(1)}" font-size="${(r * 1.02 + .3).toFixed(1)}">${n}</text>`;
}
document.getElementById('graph').innerHTML = edges + discs + labels;
</script>
</body>
</html>
